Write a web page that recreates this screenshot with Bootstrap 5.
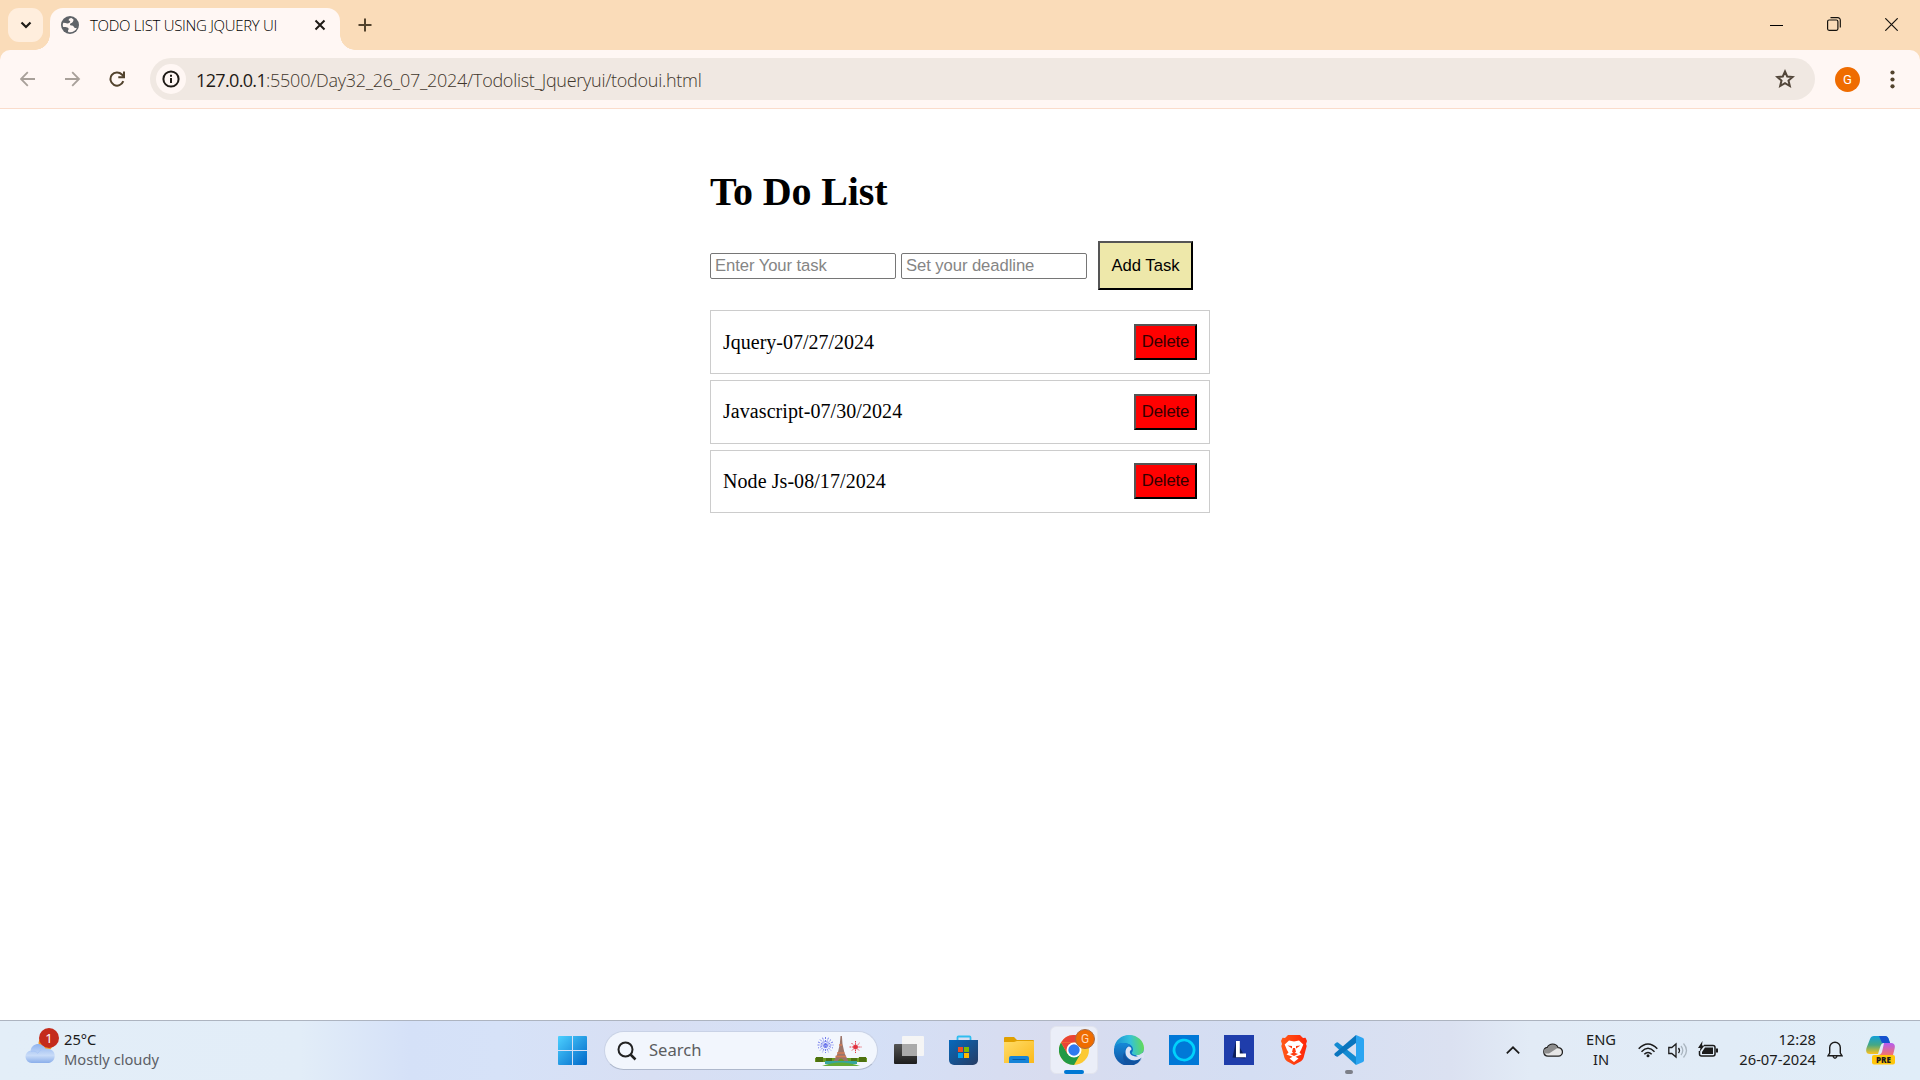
<!DOCTYPE html>
<html lang="en">
<head>
<meta charset="utf-8">
<meta name="viewport" content="width=device-width, initial-scale=1">
<title>TODO LIST USING JQUERY UI</title>
<link href="https://cdn.jsdelivr.net/npm/bootstrap@5.3.0/dist/css/bootstrap.min.css" rel="stylesheet">
<style>
body{height:1080px;overflow:hidden;background:#fff;color:#000;font-family:"Noto Sans","Open Sans",sans-serif;line-height:1}
svg{display:block;flex:none}
button{color:inherit}
.tabstrip{height:50px;background:#fadcb9;padding:8px 0 0 8px}
.tab-search{width:35px;height:34px;border-radius:11px;background:#ffeedd}
.tab-active{position:relative;width:290px;height:42px;margin-left:7px;padding:0 14px 8px 11px;background:#fff7f4;border-radius:13px 13px 0 0}
.tab-active::before,.tab-active::after{content:"";position:absolute;bottom:0;width:15px;height:15px}
.tab-active::before{left:-15px;background:radial-gradient(circle at 0 0,transparent 14.5px,#fff7f4 15px)}
.tab-active::after{right:-15px;background:radial-gradient(circle at 100% 0,transparent 14.5px,#fff7f4 15px)}
.tab-title{font:300 15px/20px "Open Sans",sans-serif;color:#000;letter-spacing:-.3px;margin:-1px 0 0 11px;white-space:nowrap}
.bar-wrap{background:#fadcb9}
.toolbar{height:59px;background:#fff7f4;border-bottom:1px solid #fadccb;border-radius:10px 10px 0 0;padding:0 20px}
.omnibox{width:1665px;height:42px;border-radius:21px;background:#f0e8e2;margin-left:25px;padding:0 20px 0 6px}
.site-info{width:30px;height:30px;background:#fff7f4}
.url{font:300 18px/24px "Open Sans",sans-serif;color:#3f362b;letter-spacing:-.27px;margin:1px 0 0 10px;white-space:nowrap}
.url b{font-weight:400;color:#1f1b16;letter-spacing:-.65px}
.avatar{width:25px;height:25px;background:#ef6c00;color:#fff;font:400 13px/1 Roboto,sans-serif}
.page-area{height:911px;padding-top:60px}
.todo{width:500px;font-family:"Liberation Serif",serif}
.todo h1{font-size:40px;font-weight:700;line-height:46px;margin:0 0 26px;color:#000;letter-spacing:-.12px}
.task-field{width:186px;height:26px;border:1px solid #767676;border-radius:2px;padding:2px 4px 1px;font:16.667px/20px "Liberation Sans",Arial,sans-serif;letter-spacing:-.08px;outline:0;margin-right:5px}
.task-field::placeholder{color:#858585;opacity:1}
.raised{border:2px solid;border-color:#555 #000 #000 #555;border-radius:0;font:16.667px/1 "Liberation Sans",Arial,sans-serif;padding:1px 0 0;color:#000}
.add-task{width:95px;height:49px;background:#eee8aa;margin-left:6px}
.remove{width:63px;height:36px;background:#f00;color:#300;letter-spacing:-.1px}
.tasks{margin-top:20px;gap:6px}
.tasks li{height:64px;border:1px solid #ccc;padding:0 12px;font-size:20px}
.tasks li+li span{margin-top:-2px;letter-spacing:.07px}
.tasks li:last-child{height:63px}
.tasks li:last-child button{margin-top:-1px}
.taskbar{height:60px;padding-bottom:1px;border-top:1px solid #adb4c0;background:linear-gradient(90deg,#e3eef8 0,#e2edf8 300px,#d5e1f8 410px,#d6e2f8 500px,#d8dff3 650px,#d4e0f7 850px,#d8dcef 1050px,#d4def3 1250px,#dbe1f1 1450px,#e2ebf6 1530px,#e0edf8 1920px);color:#1b1b1b;font-size:14.7px}
.weather{width:533px;margin-left:25px}
.weather-icon{position:relative;width:30px;height:38px}
.count{position:absolute;left:14px;top:-3px;width:20px;height:20px;background:#c42b1c;color:#fff;font-size:13px}
.two-line{line-height:20px;white-space:nowrap;margin-top:-2px}
.muted{color:#5c6066}
.start{margin-top:1px}
.search-pill{width:274px;height:39px;margin:1px 0 0 17px;border-radius:20px;background:#f2f6fd;border:1px solid #c9d2e6;border-bottom-color:#aeb8cc;padding:0 10px 0 12px;font-size:16.6px;color:#5b5d60}
.apps{margin-left:16px;gap:25px}
.app-open{position:relative;width:48px;height:48px;margin:0 -9px;border-radius:6px;background:#ebeef8;border:1px solid #e2e4ee}
.app-open i,.vs i{position:absolute;border-radius:2px}
.app-open i{left:13px;bottom:-1px;width:20px;height:4px;background:#0078d4}
.app-open span{position:absolute;left:24px;top:2px;width:20px;height:20px;background:#ef6c00;border:1px solid #a86b42;color:#ffd9b8;font:12px/1 Roboto,sans-serif}
.vs{position:relative}
.vs i{left:11px;top:35px;width:8px;height:4px;background:#7c7f88}
.tray{margin-left:auto;padding-right:25px}
</style>
<script src="https://cdn.jsdelivr.net/npm/bootstrap@5.3.0/dist/js/bootstrap.bundle.min.js"></script>
</head>
<body class="d-flex flex-column">
<header>
  <div class="tabstrip d-flex align-items-start">
    <div class="tab-search d-flex align-items-center justify-content-center">
      <svg width="12" height="8" viewBox="0 0 12 8" fill="none" stroke="#1f1b16" stroke-width="2.2"><path d="M1.5 1.5 6 6l4.500-4.500"/></svg>
    </div>
    <div class="tab-active d-flex align-items-center">
      <svg width="18" height="18" viewBox="0 0 18 18"><circle cx="9" cy="9" r="9" fill="#5f6368"/><path d="M10.500 2c-2 .2-3 1.200-2.800 2.500 1.600.3 1.900 1.200 1 2.100-1.200 1.200-3.200.9-4.200.5L2.300 6.800C1.500 8.500 1.700 10 2.200 11c1.500-.2 3.600-.2 4.800.8 1 .8.800 1.800 0 2.500l.2 1.800c3.500 1 7.500-.9 8.700-4.300-1.200.4-2.600.2-3-.9-.4-1.400-1.500-1.500-3-1.500-1.300-.3-1.200-1.600 0-2.100 1.800-.7 2.600-1.900 2.600-3.800z" fill="#fff7f4"/></svg>
      <span class="tab-title">TODO LIST USING JQUERY UI</span>
      <svg class="ms-auto" width="12" height="12" viewBox="0 0 12 12" stroke="#1f1b16" stroke-width="2"><path d="m1.500 1.500 9 9m0-9-9 9"/></svg>
    </div>
    <svg style="margin:10px 0 0 18px" width="14" height="14" viewBox="0 0 14 14" stroke="#52432d" stroke-width="2"><path d="M7 .5v13M.5 7h13"/></svg>
    <div class="ms-auto d-flex align-items-center" style="padding:9px 22px 0 0;gap:44px">
      <svg width="13" height="13" stroke="#000"><path d="M0 7.500h13"/></svg>
      <svg width="14" height="14" fill="none" stroke="#15120e" stroke-width="1.200"><rect x=".6" y="3" width="10.300" height="10.300" rx="1.500"/><path d="M3.500.7h7.300a2.500 2.500 0 0 1 2.500 2.500v7.300"/></svg>
      <svg width="13" height="13" stroke="#15120e" stroke-width="1.200"><path d="m.3.3 12.400 12.400m0-12.400L.3 12.700"/></svg>
    </div>
  </div>
  <div class="bar-wrap"><div class="toolbar d-flex align-items-center">
    <svg width="16" height="16" viewBox="0 0 16 16" fill="none" stroke="#a8a099" stroke-width="1.800"><path d="M15 8H1.500M7.800 1.200 1 8l6.800 6.800"/></svg>
    <svg style="margin-left:29px" width="16" height="16" viewBox="0 0 16 16" fill="none" stroke="#a8a099" stroke-width="1.800"><path d="M0 8h13.500M7.200 1.200 14 8l-6.800 6.800"/></svg>
    <svg style="margin-left:28px" width="16" height="16" viewBox="0 0 16 16" fill="none" stroke="#52432d" stroke-width="2"><path d="M14.300 10.200A6.600 6.600 0 1 1 12.900 3.500L15 5.700"/><path d="M15 .5v5.700H9.300"/></svg>
    <div class="omnibox d-flex align-items-center">
      <span class="site-info rounded-circle d-flex align-items-center justify-content-center"><svg width="18" height="18" viewBox="0 0 18 18" fill="none" stroke="#1f1b16" stroke-width="2"><circle cx="9" cy="9" r="7.600"/><path d="M9 8v5M9 4.800v2"/></svg></span>
      <span class="url"><b>127.0.0.1</b>:5500/Day32_26_07_2024/Todolist_Jqueryui/todoui.html</span>
      <svg class="ms-auto" width="20" height="20" viewBox="0 0 20 20" fill="none" stroke="#52463a" stroke-width="2"><path d="m10 2.500 2.200 5 5.500.5-4.200 3.600 1.300 5.400-4.800-2.900L5.200 17l1.300-5.400L2.300 8l5.500-.5z"/></svg>
    </div>
    <span class="avatar rounded-circle d-flex align-items-center justify-content-center" style="margin-left:20px">G</span>
    <svg style="margin-left:30px" width="5" height="19" viewBox="0 0 5 19" fill="#52432d"><circle cx="2.500" cy="2.500" r="2.100"/><circle cx="2.500" cy="9.500" r="2.100"/><circle cx="2.500" cy="16.300" r="2.100"/></svg>
  </div></div>
</header>

<main class="page-area">
  <section class="todo mx-auto">
    <h1>To Do List</h1>
    <form class="d-flex align-items-center">
      <input class="task-field" placeholder="Enter Your task">
      <input class="task-field" placeholder="Set your deadline">
      <button type="button" class="raised add-task">Add Task</button>
    </form>
    <ul class="tasks list-unstyled d-flex flex-column mb-0">
      <li class="d-flex align-items-center justify-content-between"><span>Jquery-07/27/2024</span><button class="raised remove">Delete</button></li>
      <li class="d-flex align-items-center justify-content-between"><span>Javascript-07/30/2024</span><button class="raised remove">Delete</button></li>
      <li class="d-flex align-items-center justify-content-between"><span>Node Js-08/17/2024</span><button class="raised remove">Delete</button></li>
    </ul>
  </section>
</main>

<footer class="taskbar d-flex align-items-center">
  <div class="weather d-flex align-items-center">
    <div class="weather-icon">
      <svg width="30" height="38" viewBox="0 0 30 38"><defs><linearGradient id="cl" x2="0" y2="1"><stop stop-color="#8fb4ef"/><stop offset=".6" stop-color="#c9dcf8"/><stop offset="1" stop-color="#8aaeea"/></linearGradient></defs><circle cx="21" cy="12" r="7.500" fill="#f7941d"/><path d="M6.500 32a6.300 6.300 0 0 1-.8-12.500C6 15.500 9.500 13 13.300 13c3.300 0 5.800 1.700 7 4.500 5.300-.6 9.400 2.600 9.400 7.200 0 4.300-3 7.300-7 7.300z" fill="url(#cl)"/><path d="M6 20.500c3-1 5.500.2 6.800 1.800 1.500-2.800 4.300-4.500 7.500-4.300" fill="none" stroke="#a9c6f5"/></svg>
      <span class="count rounded-circle d-flex align-items-center justify-content-center">1</span>
    </div>
    <div class="two-line" style="margin-left:9px">25°C<br><span class="muted">Mostly cloudy</span></div>
  </div>
  <svg class="start" width="29" height="29" viewBox="0 0 29 29"><defs><linearGradient id="wn" x2="1" y2="1"><stop stop-color="#4cd0ff"/><stop offset="1" stop-color="#0067c8"/></linearGradient></defs><path d="M1 0h13v14H0V1a1 1 0 0 1 1-1zm14 0h13a1 1 0 0 1 1 1v13H15zM0 15h14v14H1a1 1 0 0 1-1-1zm15 0h14v13a1 1 0 0 1-1 1H15z" fill="url(#wn)"/></svg>
  <div class="search-pill d-flex align-items-center">
    <svg width="20" height="20" viewBox="0 0 20 20" fill="none" stroke="#222" stroke-width="2"><circle cx="8.500" cy="8.500" r="7"/><path d="m13.500 13.500 5 5" stroke-width="2.500"/></svg>
    <span style="margin-left:12px">Search</span>
    <svg class="ms-auto" width="52" height="30" viewBox="0 0 52 30"><path d="M0 22q5-2 9 0h34q4-2 9 0v4H0z" fill="#6c9a20"/><path d="M1 21h7v5H1zm10 1h6v4h-6zm25 0h6v4h-6zm8-1h7v5h-7z" fill="#4d7110"/><path d="M10 25h32v3H10z" fill="#37a59d"/><path d="M7 30q18-7 38 0z" fill="#63aa35"/><path d="m25.500 0-.7 8-2 9-4 8h4q3-5 6.500 0h4l-3.800-8-2-9-.6-8z" fill="#9c7468"/><path d="M22 17h7.500M20.500 20.500h10.500M24 9h3" stroke="#d47b55" stroke-width="1.300"/><g fill="none" stroke="#6670ea" stroke-width=".9" stroke-dasharray="2 1"><path d="M10.500 1v16M2.500 9h16M5 3.500l11 11m0-11-11 11M7.500 1.700l6 14.600m0-14.600-6 14.600M3 6l15 6m0-6L3 12"/></g><g stroke="#e4404c"><path d="M40.500 5v12M34.500 11h12M36.500 7l8 8m0-8-8 8" stroke-dasharray="1.500 .7"/><circle cx="40.500" cy="11" r="2" fill="#e02f3c"/></g></svg>
  </div>
  <div class="apps d-flex align-items-center">
    <svg width="30" height="30" viewBox="0 0 30 30"><defs><linearGradient id="tv" x2="0" y2="1"><stop stop-color="#555"/><stop offset="1" stop-color="#1d1d1d"/></linearGradient></defs><rect y="9" width="23" height="20" rx="1" fill="url(#tv)"/><rect x="8" y="1" width="22" height="20" rx="1" fill="#f5f5f5"/><path d="M8 9h15v12H8z" fill="#aaa"/></svg>
    <svg width="30" height="30" viewBox="0 0 30 30"><defs><linearGradient id="st" x2="1" y2="1"><stop stop-color="#0669bd"/><stop offset="1" stop-color="#273c63"/></linearGradient></defs><path d="M8.500 7V2.500a1 1 0 0 1 1-1h11a1 1 0 0 1 1 1V7" fill="none" stroke="#30bdf0" stroke-width="1.800"/><path d="M0 5h29v20a5 5 0 0 1-5 5H5a5 5 0 0 1-5-5z" fill="url(#st)"/><path d="M9 12h5v5H9z" fill="#f25022"/><path d="M15 12h5v5h-5z" fill="#7fba00"/><path d="M9 18h5v5H9z" fill="#00a4ef"/><path d="M15 18h5v5h-5z" fill="#ffb900"/></svg>
    <svg width="30" height="30" viewBox="0 0 30 30"><defs><linearGradient id="fo" x2="1" y2="1"><stop stop-color="#ffdc68"/><stop offset="1" stop-color="#fbb91a"/></linearGradient></defs><path d="M0 3a1 1 0 0 1 1-1h9l3 3h16a1 1 0 0 1 1 1v3H0z" fill="#e0a000"/><path d="M0 7h10l3-1h16a1 1 0 0 1 1 1v21H0z" fill="url(#fo)"/><path d="M5 28v-5a2 2 0 0 1 2-2h16a2 2 0 0 1 2 2v5z" fill="#1583d7"/><path d="M8.500 24.500h13" stroke="#075ba6"/></svg>
    <div class="app-open d-flex align-items-center justify-content-center">
      <svg width="30" height="30" viewBox="0 0 30 30"><circle cx="15" cy="15" r="15" fill="#fcc934"/><path d="M2 7.500A15 15 0 0 1 28 7.500H15z" fill="#ea4335"/><path d="M2 7.500A15 15 0 0 0 15 30l6.500-11.200L15 22 8.500 18.800z" fill="#229a45"/><path d="M2 7.500 8.500 18.800 15 15V7.500z" fill="#ea4335"/><circle cx="15" cy="15" r="7.500" fill="#fff"/><circle cx="15" cy="15" r="5.700" fill="#2f7af0"/></svg>
      <span class="rounded-circle d-flex align-items-center justify-content-center">G</span><i></i>
    </div>
    <svg width="30" height="30" viewBox="0 0 30 30"><defs><linearGradient id="e1" x1="0" y1=".5" x2="1" y2=".4"><stop stop-color="#168bd3"/><stop offset=".55" stop-color="#33c1db"/><stop offset="1" stop-color="#66dc50"/></linearGradient><linearGradient id="e2" x2="0" y2="1"><stop stop-color="#1689d8"/><stop offset="1" stop-color="#1150a0"/></linearGradient></defs><circle cx="15" cy="15" r="14.500" fill="#0f6fc4"/><path d="M22 20.500 30 17v6l-3 1z" fill="#dae1f4"/><path d="M0 14C1 5 7.500 0 15 0c9 0 15 6.500 15 13 0 4.500-3.300 7.200-7.200 7.200-3.300 0-5-1-5-2.200 0-.8 1.200-1.400 1.200-3.400C19 10.500 14.500 8 9.500 8 4.500 8 1 10.500 0 14z" fill="url(#e1)"/><path d="M0 14C1.500 10 5 8 9.500 8c3 0 5.500 1 7.200 2.400-4.500.2-6.200 3.600-6.200 6.600 0 6 5 9.500 10 9.500 3 0 5-1 7-2.500A15 15 0 0 1 0 14z" fill="url(#e2)"/><path d="M14.500 11.500c-2 1-3 3-3 5.500 0 5.500 4.500 8.500 9.500 8.500 3 0 5-1 7.500-2.500l2-4c-2.500 2-5 2.500-7.700 2.500-3.300 0-7-1.500-7-4.500 0-1.200 1-2 1.700-2.500 0-1.500-.8-3-3-3z" fill="#dce3f5"/><path d="M10.500 17c0 6 5.500 9.500 10.500 8.500 3-.5 5-1.500 6.800-3A15 15 0 0 1 15 30c-5-1-7.500-8-4.500-13z" fill="#11539f"/></svg>
    <svg width="30" height="30" viewBox="0 0 30 30"><path d="M0 0h30v30H0z" fill="#0078d7"/><path d="M14.500 25A10 10 0 1 1 18.500 24.400q-2.300.8-4 .6z" fill="none" stroke="#00d2fb" stroke-width="2.700"/></svg>
    <svg width="30" height="30" viewBox="0 0 30 30"><path d="M0 0h30v30H0z" fill="#1f3dab"/><path d="m12 6-3.500 16.500 13 1L20 20z" fill="#0c1e59"/><path d="M12 6h3.800v12.500H22v3.700H12z" fill="#fff"/></svg>
    <svg width="30" height="30" viewBox="0 0 30 30"><defs><linearGradient id="br"><stop stop-color="#ff5a18"/><stop offset="1" stop-color="#ff2408"/></linearGradient></defs><path d="M9 0h12l3 3 2.500-.3L28 6l-1 3 .7 2-3.200 12q-.7 2-2.500 3.200L15 30l-7-3.800q-1.800-1.200-2.500-3.200L2.300 11 3 9 2 6l1.500-3.300L6 3z" fill="url(#br)"/><path d="M10 5.500 15 6.500 20 5.500 24.300 9.500 22 15l-1.500 2.500 2 2-6 2.300 3 1.700-4.500 3.500-4.500-3.500 3-1.700-6-2.300 2-2L8 15 5.700 9.500z" fill="#fff"/><path d="M8.500 10.500 13 11v2.500zm13 0L17 11v2.500zM11 19l4-1.500 4 1.500-4 2zM14 13h2l1 4-2 1-2-1z" fill="#ff3c10"/></svg>
    <div class="vs"><svg width="30" height="30" viewBox="0 0 30 30"><path d="M2.500 7.500.8 8.800Q-.2 9.800.8 10.800L22 30v-8.300L4 7.500q-.8-.5-1.500 0z" fill="#148bd2"/><path d="M2.500 21.500.8 20.200q-1-1 0-2L22 0v8L4 21.500q-.8.500-1.500 0z" fill="#0a75be"/><path d="m22 0 7 3q1 .6 1 1.500v21q0 .9-1 1.500l-7 3z" fill="#2ba5f2"/></svg><i></i></div>
  </div>
  <div class="tray d-flex align-items-center">
    <svg width="14" height="8" viewBox="0 0 14 8" fill="none" stroke="#1b1b1b" stroke-width="1.700"><path d="m.8 7.300 6.200-6 6.200 6"/></svg>
    <svg style="margin-left:23px" width="20" height="14" viewBox="0 0 20 14"><path d="M5 13.200A4.400 4.400 0 0 1 4.300 4.500 6 6 0 0 1 15 4.600a4.300 4.300 0 0 1 .3 8.600z" fill="#e6e6e6" stroke="#222" stroke-width="1.300"/><path d="M1.500 10.500c-2-4 1-5.500 3-5.300C6 .5 13 0 14.500 5L6 10.500z" fill="#8d8d8d"/></svg>
    <div class="two-line text-center" style="margin-left:23px;width:30px">ENG<br>IN</div>
    <svg style="margin-left:22px" width="20" height="15" viewBox="0 0 20 15" fill="none" stroke="#1b1b1b" stroke-width="1.500"><path d="M.7 5.800q9.300-9.600 18.600 0M3.500 8.700q6.500-6.700 13 0M6.300 11.300q3.700-3.600 7.400 0"/><circle cx="10" cy="12.800" r="1.500" fill="#1b1b1b" stroke="none"/></svg>
    <svg style="margin-left:10px" width="20" height="17" viewBox="0 0 20 17" fill="none" stroke="#1b1b1b" stroke-width="1.300"><path d="M.8 5.500h3L8 2v13l-4.200-3.500h-3zM10.500 6q2 2.500 0 5"/><path d="M13 4q3.500 4.500 0 9M15.500 1.500q6 7 0 14" stroke="#aab5bf"/></svg>
    <svg style="margin-left:10px" width="20" height="18" viewBox="0 0 20 18"><path d="M6 4.500h9a2 2 0 0 1 2 2V13a2 2 0 0 1-2 2H3.500a2 2 0 0 1-2-2v-3" fill="none" stroke="#1b1b1b" stroke-width="1.500"/><path d="M7 6.500h8V13H4v-2zM18 7.500h2v4h-2zM4.500 0 0 7h2.500L1.500 11 6.500 4.500H4z" fill="#1b1b1b"/></svg>
    <div class="two-line text-end" style="margin-left:20px;width:78px">12:28<br>26-07-2024</div>
    <svg style="margin-left:11px" width="16" height="19" viewBox="0 0 16 19" fill="none" stroke="#1b1b1b" stroke-width="1.400"><path d="M1 14.800 2.700 12V6.500a5.300 5.300 0 0 1 10.600 0V12l1.700 2.800zM6 15.500q2 3.500 4 0"/></svg>
    <svg style="margin-left:23px" width="29" height="30" viewBox="0 0 29 30"><defs><linearGradient id="c1" x2="0" y2="1"><stop stop-color="#12a0d8"/><stop offset=".5" stop-color="#45a884"/><stop offset="1" stop-color="#ffc21a"/></linearGradient><linearGradient id="c2" x2="0" y2="1"><stop stop-color="#b45cf0"/><stop offset="1" stop-color="#f4736b"/></linearGradient></defs><path d="M8 1h11q3 0 4 4l1 3h-6q-2.500 0-3.500 3l-2.500 8H4q-5 0-3.500-6L4 4q1-3 4-3z" fill="url(#c1)"/><path d="M13 1h6q3 0 4 4l1 3h-8z" fill="#1551cf"/><path d="M18 8h7q5 0 3.500 6L27 20H12q3 0 4-3z" fill="url(#c2)"/><rect x="6" y="20" width="23" height="9.500" rx="2" fill="#ffc60a"/><text x="17.500" y="27.600" text-anchor="middle" font-family="Open Sans" font-weight="800" font-size="8" fill="#1b1b1b">PRE</text></svg>
  </div>
</footer>
</body>
</html>
